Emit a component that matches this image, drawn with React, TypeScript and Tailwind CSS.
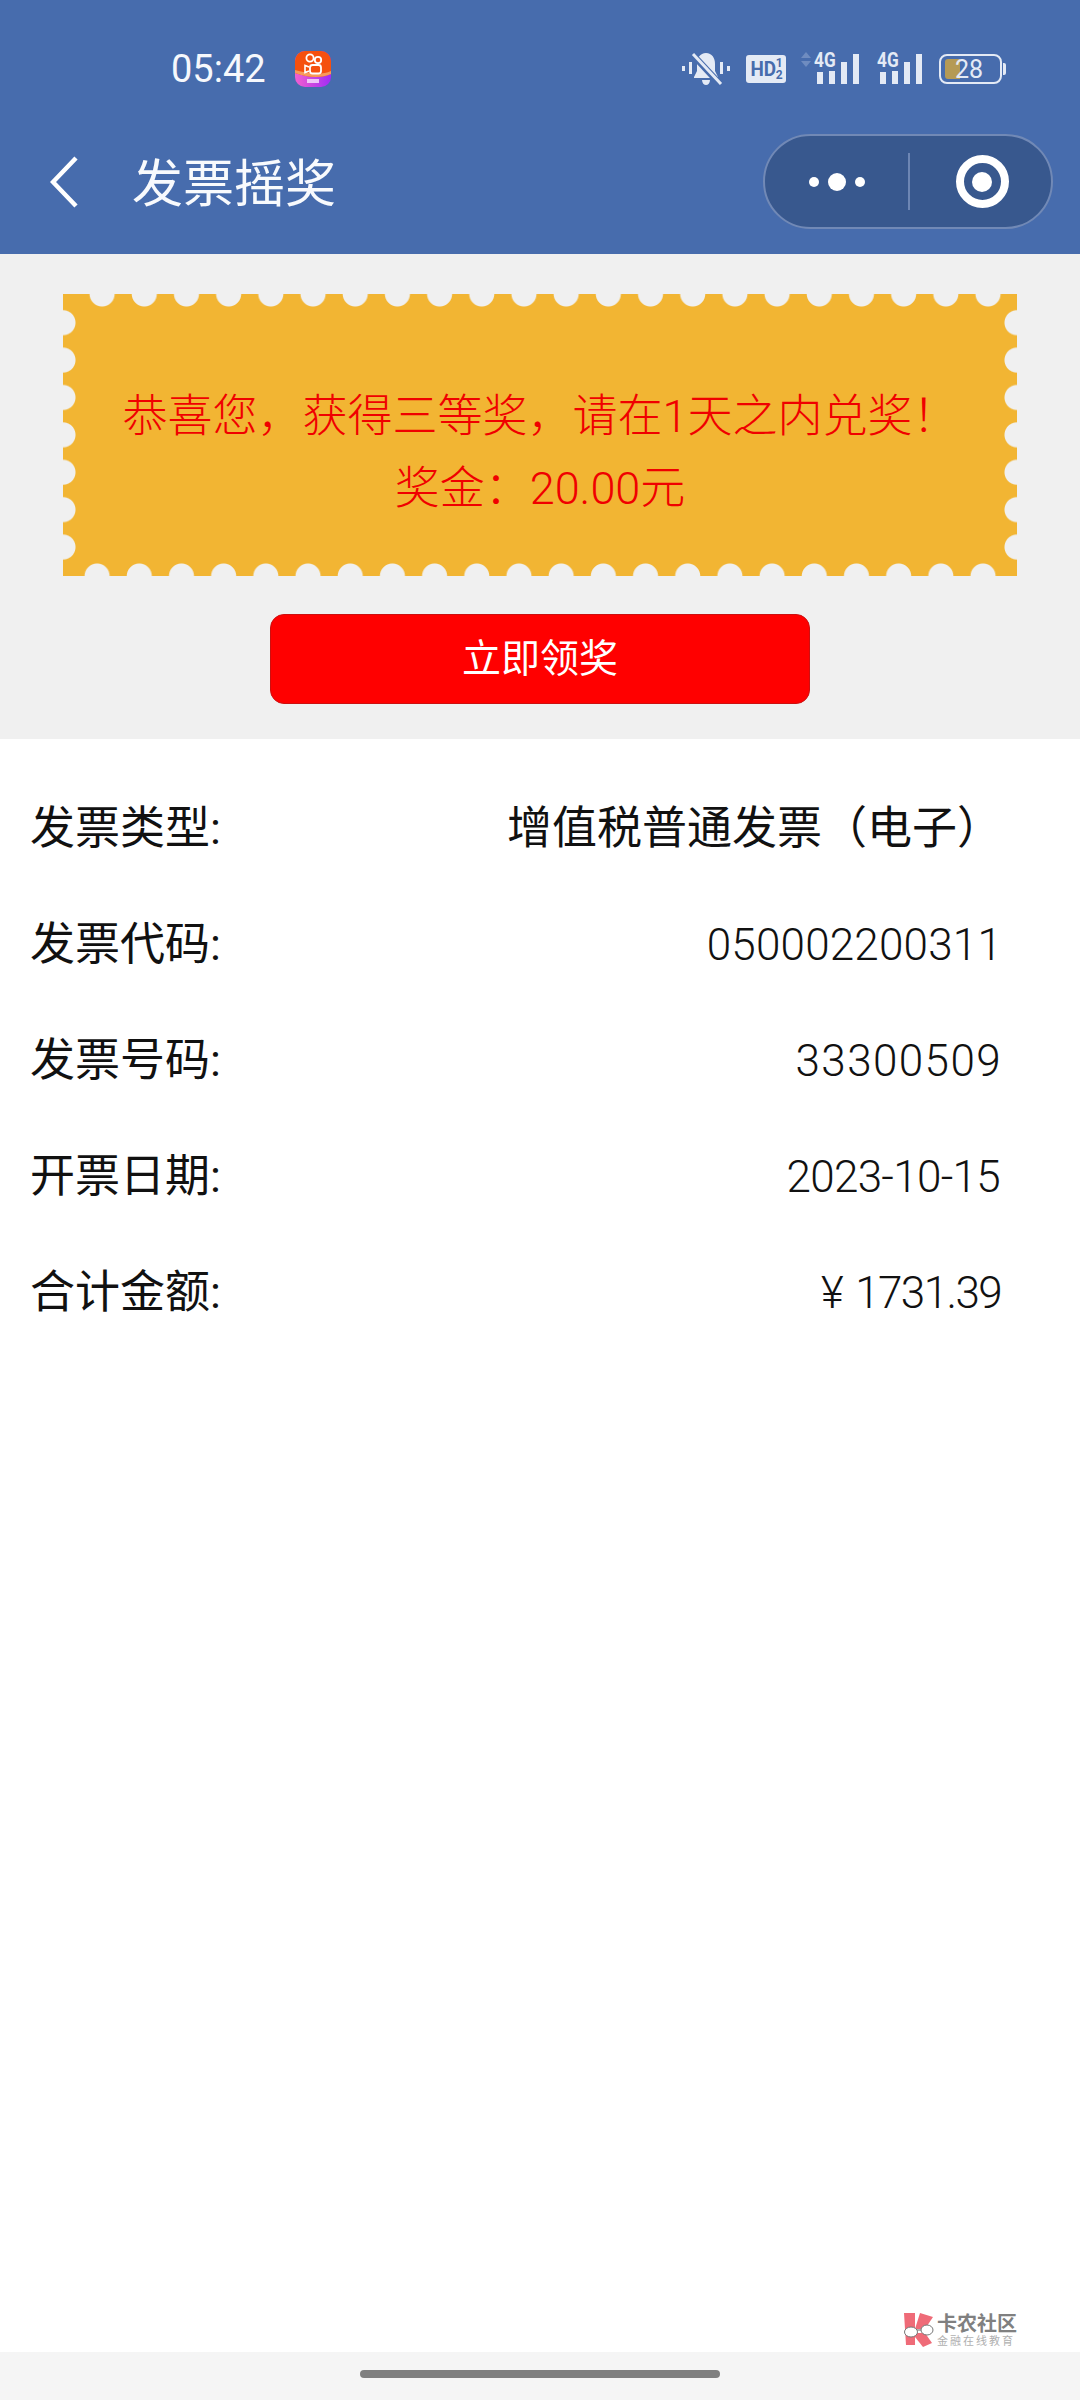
const fontStack = "font-['Roboto','Noto_Sans_CJK_SC',sans-serif]"

const rows = [
  { label: '发票类型:', value: '增值税普通发票（电子）', valueClass: 'text-[45px]' },
  { label: '发票代码:', value: '050002200311', valueClass: 'text-[44px] font-light tracking-[0.2px]' },
  { label: '发票号码:', value: '33300509', valueClass: 'text-[44px] font-light tracking-[1.4px]' },
  { label: '开票日期:', value: '2023-10-15', valueClass: 'text-[44px] font-light tracking-[-0.7px] mr-[2px]' },
  { label: '合计金额:', value: '¥ 1731.39', valueClass: 'text-[44px] font-light tracking-[-1.6px] [word-spacing:4px] mr-[1px]' },
]

const notch = 'absolute bg-[radial-gradient(circle,#f0f0f0_12px,transparent_13px)]'

function AppBadge() {
  return (
    <svg width="36" height="36" viewBox="0 0 36 36">
      <defs>
        <linearGradient id="ks" x1="0" y1="0" x2="1" y2="0">
          <stop offset="0" stopColor="#f25fd0" />
          <stop offset="1" stopColor="#a02cf5" />
        </linearGradient>
      </defs>
      <rect width="36" height="36" rx="10" fill="url(#ks)" />
      <path d="M0 10a10 10 0 0 1 10-10h16a10 10 0 0 1 10 10v13c-9 4-22 4-36-1z" fill="#f5500f" />
      <path d="M0 22c14 5 27 5 36 1v-3c-9 4-22 3-36-1z" fill="#f79a5a" />
      <circle cx="15" cy="7" r="3.6" fill="none" stroke="#fff" strokeWidth="1.8" />
      <circle cx="23" cy="9" r="3.2" fill="none" stroke="#fff" strokeWidth="1.8" />
      <rect x="15" y="14" width="11" height="8.5" rx="2.5" fill="none" stroke="#fff" strokeWidth="1.8" />
      <path d="M14 16l-4-1.5v7l4-1.5" fill="none" stroke="#fff" strokeWidth="1.6" />
      <path d="M12 28h12v4H12z" fill="#f6ddfb" opacity="0.85" />
    </svg>
  )
}

function BellOff() {
  return (
    <svg width="48" height="34" viewBox="0 0 48 34" fill="#e4eaf5">
      <rect x="0" y="14" width="3" height="5" />
      <rect x="7" y="10" width="3" height="12" />
      <rect x="38" y="10" width="3" height="12" />
      <rect x="45" y="14" width="3" height="5" />
      <path d="M24 1c-6 0-9 5-9 11v7l-3 6v1h24v-1l-3-6v-7c0-6-3-11-9-11z" />
      <path d="M20 28h8c0 3-2 5-4 5s-4-2-4-5z" />
      <path d="M10 2l28 30" stroke="#476cad" strokeWidth="6.5" />
      <path d="M11 2l28 30" stroke="#e4eaf5" strokeWidth="3" />
    </svg>
  )
}

function Signal({ arrows }: { arrows?: boolean }) {
  return (
    <div className="relative w-[46px] h-[32px] mb-[2px]">
      {arrows && (
        <svg className="absolute left-[-14px] top-[0px]" width="12" height="16" viewBox="0 0 12 16" fill="#6f8cc0">
          <path d="M6 0l5 6H1z" />
          <path d="M6 15l5-6H1z" />
        </svg>
      )}
      <span className="absolute left-0 top-[-4px] text-[21px] leading-[24px] font-bold text-[#e4eaf5] scale-x-[0.82] origin-left">4G</span>
      <div className="absolute left-[3px] bottom-0 flex items-end gap-[6px]">
        <div className="w-[6px] h-[12px] bg-[#e4eaf5]" />
        <div className="w-[6px] h-[13px] bg-[#e4eaf5]" />
        <div className="w-[6px] h-[22px] bg-[#e4eaf5]" />
        <div className="w-[6px] h-[30px] bg-[#e4eaf5]" />
      </div>
    </div>
  )
}

export default function App() {
  return (
    <div className={`w-[1080px] h-[2400px] bg-white flex flex-col ${fontStack}`}>
      <header className="h-[254px] bg-[#476cad] text-white flex flex-col shrink-0">
        <div className="h-[134px] pt-[4px] pl-[171px] pr-[74px] flex items-center">
          <span className="text-[38px] leading-none text-[#f6f8fc] w-[107px]">05:42</span>
          <div className="ml-[17px] w-[36px] h-[36px]">
            <AppBadge />
          </div>
          <div className="ml-auto flex items-center">
            <BellOff />
            <div className="ml-[16px] w-[40px] h-[28px] rounded-[3px] bg-[#e4eaf5] flex items-center justify-center text-[#476cad] text-[21px] font-bold leading-none">
              <span className="scale-x-90">HD</span>
              <span className="text-[12px] leading-[12px] flex flex-col items-center -ml-[2px]">
                <span>1</span>
                <span>2</span>
              </span>
            </div>
            <div className="ml-[28px]">
              <Signal arrows />
            </div>
            <div className="ml-[17px]">
              <Signal />
            </div>
            <div className="ml-[16px] flex items-center">
              <div className="relative w-[63px] h-[30px] rounded-[8px] border-2 border-[#e4eaf5] text-[#e4eaf5] flex items-center justify-end pr-[17px]">
                <div className="absolute left-[4px] top-[3px] bottom-[3px] w-[15px] rounded-l-[3px] bg-[#b59a55]" />
                <span className="relative text-[25px] leading-none">28</span>
              </div>
              <div className="w-[3px] h-[12px] ml-[1px] rounded-r-[2px] bg-[#e4eaf5]" />
            </div>
          </div>
        </div>
        <div className="flex-1 flex items-center pl-[50px] pr-[27px] pb-[25px]">
          <svg width="28" height="52" viewBox="0 0 28 52" fill="none" stroke="#fff" strokeWidth="4.5" className="shrink-0">
            <path d="M26 2L3 26l23 24" />
          </svg>
          <h1 className="ml-[54px] mt-[5px] text-[51px] leading-none font-normal text-[#f8fafd]">发票摇奖</h1>
          <div className="ml-auto w-[290px] h-[95px] rounded-[48px] bg-[#38588e] border-2 border-[#7189b6] flex items-center">
            <div className="w-[143px] flex items-center justify-center gap-[9px]">
              <span className="w-[10px] h-[10px] rounded-full bg-white" />
              <span className="w-[18px] h-[18px] rounded-full bg-white" />
              <span className="w-[10px] h-[10px] rounded-full bg-white" />
            </div>
            <div className="w-[2px] h-[57px] bg-[#6d86b4]" />
            <div className="flex-1 flex items-center justify-center pl-[3px]">
              <div className="w-[53px] h-[53px] rounded-full border-[8px] border-white flex items-center justify-center">
                <span className="w-[20px] h-[20px] rounded-full bg-white" />
              </div>
            </div>
          </div>
        </div>
      </header>

      <section className="h-[485px] bg-[#f0f0f0] flex flex-col items-center pt-[40px] shrink-0">
        <div className="relative w-[954px] h-[282px] pt-[36px] flex flex-col items-center justify-center text-[#f00000] text-[45px] leading-[72px] bg-[#f2b533]">
          <span className={`${notch} left-[18px] top-0 w-[928px] h-[13px] bg-[size:42.2px_26px] bg-[position:0_-13px]`} />
          <span className={`${notch} left-[13px] bottom-0 w-[928px] h-[13px] bg-[size:42.2px_26px] bg-[position:0_0]`} />
          <span className={`${notch} left-0 top-[10px] w-[13px] h-[262px] bg-[size:26px_37.4px] bg-[position:-13px_0]`} />
          <span className={`${notch} right-0 top-[10px] w-[13px] h-[262px] bg-[size:26px_37.4px] bg-[position:0_0]`} />
          <p className="font-light">恭喜您，获得三等奖，请在1天之内兑奖！</p>
          <p className="font-light">奖金：20.00元</p>
        </div>
        <button className="mt-[38px] w-[540px] h-[90px] pt-[1px] rounded-[14px] bg-[#ff0000] border border-[#cc1010] text-white text-[39px] leading-none">
          立即领奖
        </button>
      </section>

      <main className="flex-1 pl-[30px] pr-[78px] pt-[32px] text-[#111]">
        {rows.map((row) => (
          <div key={row.label} className="h-[116px] flex items-center justify-between">
            <span className="text-[45px]">{row.label}</span>
            <span className={row.valueClass}>{row.value}</span>
          </div>
        ))}
      </main>

      <div className="relative h-[48px] pb-[5px] bg-[#f5f5f5] flex items-center justify-center shrink-0">
        <div className="absolute right-[63px] bottom-[52px] flex items-center gap-[3px]">
          <svg width="34" height="35" viewBox="0 0 34 35">
            <path d="M4 0h11v32H6z" fill="#ef6b78" />
            <path d="M20 0l13 4-8 12H15z" fill="#ef6b78" />
            <path d="M15 20h10l7 10-9 4-8-10z" fill="#ef6b78" />
            <path d="M6 17h16M22 17h5" stroke="#666" strokeWidth="1.2" />
            <ellipse cx="11" cy="19" rx="6.5" ry="5" fill="#fff" stroke="#777" strokeWidth="1" />
            <ellipse cx="27" cy="17" rx="6" ry="5" fill="#fff" stroke="#777" strokeWidth="1" />
          </svg>
          <div className="flex flex-col items-start text-[#808080]">
            <span className="text-[20px] leading-[21px] font-bold">卡农社区</span>
            <span className="text-[11px] leading-[13px] text-[#b0b0b0] tracking-[2px]">金融在线教育</span>
          </div>
        </div>
        <div className="w-[360px] h-[8px] rounded-full bg-[#7f7f7f]" />
      </div>
    </div>
  )
}
